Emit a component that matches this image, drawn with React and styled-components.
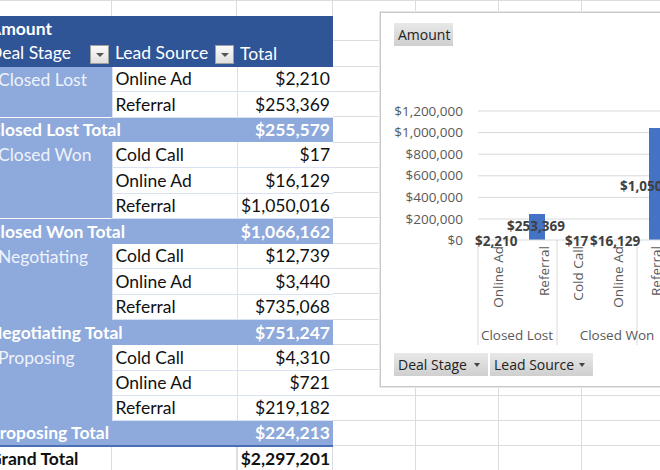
import React from "react";
import styled, { createGlobalStyle } from "styled-components";

const Global = createGlobalStyle`
  html, body { margin: 0; padding: 0; overflow: hidden; }
  body { font-family: Lato, "Open Sans", sans-serif; }
`;

const RH = 25.3;

const Sheet = styled.div`
  position: relative;
  width: 660px;
  height: 470px;
  overflow: hidden;
  background-color: #fff;
  background-image:
    linear-gradient(to right, transparent 111px, #dadcdf 111px, #dadcdf 112px, transparent 112px),
    linear-gradient(to right, transparent 236px, #dadcdf 236px, #dadcdf 237px, transparent 237px),
    linear-gradient(to right, transparent 332px, #dadcdf 332px, #dadcdf 333px, transparent 333px),
    linear-gradient(to right, transparent 415px, #dadcdf 415px, #dadcdf 416px, transparent 416px),
    linear-gradient(to right, transparent 498px, #dadcdf 498px, #dadcdf 499px, transparent 499px),
    linear-gradient(to right, transparent 581px, #dadcdf 581px, #dadcdf 582px, transparent 582px),
    repeating-linear-gradient(to bottom, transparent 0, transparent ${RH - 1}px, #dadcdf ${RH - 1}px, #dadcdf ${RH}px);
  background-position: 0 0, 0 0, 0 0, 0 0, 0 0, 0 0, 0 16px;
`;

const Pivot = styled.table`
  border-collapse: collapse;
  margin: 16px 0 0 -14px;
  font-size: 17.5px;
  table-layout: fixed;
  width: 347px;
  td { height: ${RH}px; padding: 0 3px; box-sizing: border-box; white-space: nowrap; overflow: hidden; line-height: 1; }
`;

const HeadRow = styled.tr`
  background: #2f5597;
  color: #fff;
  td { font-weight: ${(p) => (p.$bold ? 700 : 400)}; }
`;

const Drop = styled.span`
  display: inline-block;
  width: 19px;
  height: 19px;
  background: linear-gradient(#fafafa, #e0e0e0);
  border: 1px solid #a0a0a0;
  box-sizing: border-box;
  position: relative;
  float: right;
  margin-top: 1px;
  &::after {
    content: "";
    position: absolute;
    left: 5px; top: 7px;
    border-left: 4px solid transparent;
    border-right: 4px solid transparent;
    border-top: 4px solid #555;
  }
`;

const StageCell = styled.td`
  background: #8ea9db;
  color: #eef3fb;
  vertical-align: top;
  padding-top: 4px !important;
`;

const Minus = styled.span`
  display: inline-block;
  width: 6px;
  height: 7px;
  background: #c9d4e8;
  margin-right: 3px;
  vertical-align: 3px;
`;

const DataCell = styled.td`
  background: #fff;
  color: #111;
  border-bottom: 1px solid #d9e1f2;
  border-left: 1px solid #d9e1f2;
  text-align: ${(p) => (p.$right ? "right" : "left")};
`;

const TotalRow = styled.tr`
  background: #8ea9db;
  color: #fff;
  font-weight: 700;
  td:last-child { text-align: right; }
`;

const GrandRow = styled.tr`
  color: #111;
  font-weight: 700;
  border-top: 2px solid #4a6fb5;
  td:last-child { text-align: right; border-left: 1px solid #d9e1f2; }
`;

const Chart = styled.div`
  position: absolute;
  left: 380px;
  top: 12px;
  width: 300px;
  height: 375px;
  background: #fff;
  border: 1px solid #c8c8c8;
  box-shadow: 0 0 0 1px #e8e8e8;
  box-sizing: border-box;
  font-family: "Open Sans", Lato, sans-serif;
`;

const FieldBtn = styled.div`
  position: absolute;
  left: ${(p) => p.$x}px;
  top: ${(p) => p.$y}px;
  width: ${(p) => p.$w}px;
  height: 23px;
  background: linear-gradient(#e8e8e8, #cfcfcf);
  color: #222;
  font-size: 14px;
  display: flex;
  align-items: center;
  padding: 0 4px;
  box-sizing: border-box;
  justify-content: space-between;
`;

const Arrow = styled.span`
  border-left: 3.5px solid transparent;
  border-right: 3.5px solid transparent;
  border-top: 4px solid #444;
  margin-right: 4px;
`;

const rows = [
  { stage: "Closed Lost", items: [["Online Ad", "$2,210"], ["Referral", "$253,369"]], total: "$255,579" },
  { stage: "Closed Won", items: [["Cold Call", "$17"], ["Online Ad", "$16,129"], ["Referral", "$1,050,016"]], total: "$1,066,162" },
  { stage: "Negotiating", items: [["Cold Call", "$12,739"], ["Online Ad", "$3,440"], ["Referral", "$735,068"]], total: "$751,247" },
  { stage: "Proposing", items: [["Cold Call", "$4,310"], ["Online Ad", "$721"], ["Referral", "$219,182"]], total: "$224,213" },
];

const ticks = ["$1,200,000", "$1,000,000", "$800,000", "$600,000", "$400,000", "$200,000", "$0"];

function ChartSvg() {
  const t = { fontFamily: "Open Sans, sans-serif", fontSize: 13.5 };
  return (
    <svg width="300" height="375" style={{ position: "absolute", left: 0, top: 0 }}>
      {ticks.map((l, i) => {
        const y = 98 + i * 21.6;
        return (
          <g key={l}>
            <text x="82" y={y + 4.5} textAnchor="end" fill="#595959" {...t}>{l}</text>
            {i < 6 && <line x1="97" x2="300" y1={y} y2={y} stroke="#d9d9d9" strokeWidth="1" />}
          </g>
        );
      })}
      <rect x="148" y="201" width="16" height="26" fill="#4472c4" />
      <rect x="268" y="115" width="20" height="112" fill="#4472c4" />
      <line x1="97" x2="300" y1="227" y2="227" stroke="#d9d9d9" />
      {[97, 176, 256].map((x) => (
        <line key={x} x1={x} x2={x} y1="227" y2="332" stroke="#d9d9d9" />
      ))}
      <g fontWeight="700" fill="#404040" {...t}>
        <text x="94" y="233">$2,210</text>
        <text x="126" y="218">$253,369</text>
        <text x="184" y="233">$17</text>
        <text x="209" y="233">$16,129</text>
        <text x="239" y="178">$1,050</text>
      </g>
      {[["Online Ad", 117], ["Referral", 163], ["Cold Call", 197], ["Online Ad", 237], ["Referral", 275]].map(([l, x], i) => (
        <text key={i} transform={`translate(${x + 5},233) rotate(-90)`} textAnchor="end" fill="#595959" {...t}>{l}</text>
      ))}
      <text x="136" y="327" textAnchor="middle" fill="#595959" {...t}>Closed Lost</text>
      <text x="236" y="327" textAnchor="middle" fill="#595959" {...t}>Closed Won</text>
    </svg>
  );
}

export default function App() {
  return (
    <Sheet>
      <Global />
      <Pivot>
        <colgroup>
          <col style={{ width: 126 }} />
          <col style={{ width: 125 }} />
          <col style={{ width: 96 }} />
        </colgroup>
        <tbody>
          <HeadRow $bold><td colSpan={3}>Amount</td></HeadRow>
          <HeadRow>
            <td>Deal Stage<Drop /></td>
            <td>Lead Source<Drop /></td>
            <td>Total</td>
          </HeadRow>
          {rows.map((g) => (
            <React.Fragment key={g.stage}>
              {g.items.map(([src, v], i) => (
                <tr key={src}>
                  {i === 0 && (
                    <StageCell rowSpan={g.items.length}>
                      <Minus />{g.stage}
                    </StageCell>
                  )}
                  <DataCell>{src}</DataCell>
                  <DataCell $right>{v}</DataCell>
                </tr>
              ))}
              <TotalRow>
                <td colSpan={2}>{g.stage} Total</td>
                <td>{g.total}</td>
              </TotalRow>
            </React.Fragment>
          ))}
          <GrandRow>
            <td>Grand Total</td>
            <td></td>
            <td>$2,297,201</td>
          </GrandRow>
        </tbody>
      </Pivot>
      <Chart>
        <ChartSvg />
        <FieldBtn $x={13} $y={10} $w={59}>Amount</FieldBtn>
        <FieldBtn $x={13} $y={340} $w={94}>Deal Stage<Arrow /></FieldBtn>
        <FieldBtn $x={109} $y={340} $w={103}>Lead Source<Arrow /></FieldBtn>
      </Chart>
    </Sheet>
  );
}
